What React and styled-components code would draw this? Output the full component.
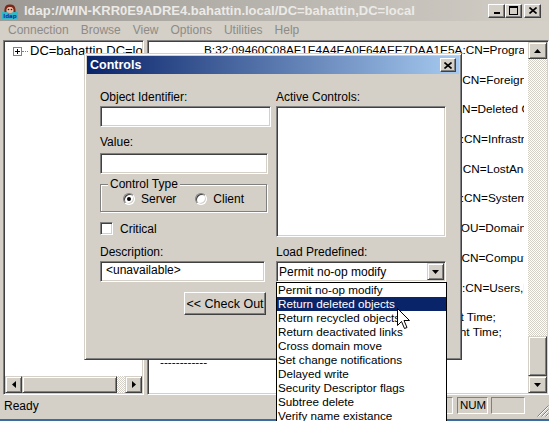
import React from 'react';
import styled, { createGlobalStyle, css } from 'styled-components';

const GlobalStyle = createGlobalStyle`
  html, body {
    margin: 0;
    padding: 0;
    background: #d4d0c8;
  }
  * {
    box-sizing: border-box;
  }
`;

const sunken = css`
  border: 1px solid;
  border-color: #808080 #ffffff #ffffff #808080;
  box-shadow: inset 1px 1px #404040, inset -1px -1px #d4d0c8;
  padding: 1px;
`;

const raised = css`
  border: 1px solid;
  border-color: #d4d0c8 #404040 #404040 #d4d0c8;
  box-shadow: inset 1px 1px #ffffff, inset -1px -1px #808080;
`;

const dither = css`
  background-color: #ffffff;
  background-image: repeating-conic-gradient(#d4d0c8 0 25%, #ffffff 0 50%);
  background-size: 2px 2px;
`;

const resultLines = [
  { indent: 44, text: 'B:32:09460C08AF1E4A4EA0F64AEE7DAA1E5A:CN=Program Data,DC=bahattin,DC=local;' },
  { text: '' },
  { indent: 40, text: 'B:32:22B70C67D56E4EFB91E9300FCA3DC1AA:CN=ForeignSecurityPrincipals,DC=bahattin,DC=local;' },
  { text: '' },
  { indent: 40, text: 'B:32:18E2EA80684F11D2B9AA00C04F79F805:CN=Deleted Objects,DC=bahattin,DC=local;' },
  { text: '' },
  { indent: 40, text: 'B:32:2FBAC1870ADE11D297C400C04FD8D5CD:CN=Infrastructure,DC=bahattin,DC=local;' },
  { text: '' },
  { indent: 40, text: 'B:32:AB8153B7768811D1ADED00C04FD8D5CD:CN=LostAndFound,DC=bahattin,DC=local;' },
  { text: '' },
  { indent: 40, text: 'B:32:AB1D30F3768811D1ADED00C04FD8D5CD:CN=System,DC=bahattin,DC=local;' },
  { text: '' },
  { indent: 40, text: 'B:32:A361B2FFFFD211D1AA4B00C04FD7D83A:OU=Domain Controllers,DC=bahattin,DC=local;' },
  { text: '' },
  { indent: 40, text: 'B:32:AA312825768811D1ADED00C04FD8D5CD:CN=Computers,DC=bahattin,DC=local;' },
  { text: '' },
  { indent: 40, text: 'B:32:A9D1CA15768811D1ADED00C04FD8D5CD:CN=Users,DC=bahattin,DC=local;' },
  { text: '' },
  { indent: 44, text: 'whenCreated: 3/8/2013 2:16:09 PM GTB Daylight Time;' },
  { indent: 44, text: 'whenChanged: 3/8/2013 2:17:52 PM GTB Daylight Time;' },
  { text: '' },
  { text: '------------' },
];

const predefined = [
  'Permit no-op modify',
  'Return deleted objects',
  'Return recycled objects',
  'Return deactivated links',
  'Cross domain move',
  'Set change notifications',
  'Delayed write',
  'Security Descriptor flags',
  'Subtree delete',
  'Verify name existance',
];

const menus = ['Connection', 'Browse', 'View', 'Options', 'Utilities', 'Help'];

const Arrow = ({ dir }) => {
  const vertical = dir === 'up' || dir === 'down';
  const points = {
    up: '3.5,0 7,4 0,4',
    down: '0,0 7,0 3.5,4',
    left: '4,0 4,7 0,3.5',
    right: '0,0 4,3.5 0,7',
  }[dir];
  return (
    <svg width={vertical ? 7 : 4} height={vertical ? 4 : 7} viewBox={vertical ? '0 0 7 4' : '0 0 4 7'}>
      <polygon points={points} fill="#000" />
    </svg>
  );
};

const CloseGlyph = () => (
  <svg width="8" height="7" viewBox="0 0 8 7">
    <path d="M0.5 0.5 L7.5 6.5 M7.5 0.5 L0.5 6.5" stroke="#000" strokeWidth="1.6" />
  </svg>
);

const AppIcon = () => (
  <svg width="16" height="16" viewBox="0 0 16 16">
    <rect x="0" y="9" width="16" height="7" fill="#33b8c8" />
    <text x="8" y="15" fontSize="5.5" fontFamily="DejaVu Sans, sans-serif" fontWeight="bold" fill="#1b2f94" textAnchor="middle">ldap</text>
    <circle cx="8" cy="6" r="4" fill="#e8b9a0" />
    <path d="M2.5 9 C2 4, 4 1, 8 1.5 C12 1, 14 4, 13.5 9 L11.5 9 C12 6, 11 4, 8 4 C5 4, 4 6, 4.5 9 Z" fill="#7b2616" />
    <circle cx="6.5" cy="6.5" r="0.8" fill="#222" />
    <circle cx="9.5" cy="6.5" r="0.8" fill="#222" />
  </svg>
);

const Cursor = styled.svg`
  position: absolute;
  left: 397px;
  top: 308px;
`;

const Window = styled.div`
  position: relative;
  width: 549px;
  height: 421px;
  overflow: hidden;
  display: flex;
  flex-direction: column;
  background: #d4d0c8;
  font-family: "Liberation Sans", Arial, sans-serif;
  font-size: 12px;
  color: #000;
`;

const TitleBar = styled.div`
  flex: none;
  height: 21px;
  display: flex;
  align-items: center;
  padding: 0 8px 0 2px;
  background: linear-gradient(to right, #9d9a95, #d3cfc7);
`;

const TitleText = styled.div`
  flex: 1;
  margin-left: 6px;
  font-weight: bold;
  font-size: 13px;
  color: #eceae6;
  white-space: nowrap;
`;

const CaptionButton = styled.div`
  width: 17px;
  height: 14px;
  margin-left: ${(p) => p.$gap || 0}px;
  display: flex;
  align-items: center;
  justify-content: center;
  background: #d4d0c8;
  border: 1px solid;
  border-color: #ffffff #404040 #404040 #ffffff;
  box-shadow: inset -1px -1px #808080;
`;

const MenuBar = styled.div`
  flex: none;
  height: 18px;
  display: flex;
  align-items: center;
  padding-left: 2px;
`;

const MenuItem = styled.span`
  padding: 0 6px;
  line-height: 18px;
  color: #8d8b87;
`;

const Body = styled.div`
  flex: 1;
  min-height: 0;
  display: flex;
  gap: 3px;
  padding: 1px 0 0 3px;
`;

const TreePane = styled.div`
  ${sunken};
  width: 141px;
  display: flex;
  flex-direction: column;
  background: #ffffff;
`;

const TreeArea = styled.div`
  flex: 1;
  padding: 1px 0 0 8px;
  overflow: hidden;
`;

const TreeRow = styled.div`
  height: 16px;
  display: flex;
  align-items: center;
  white-space: nowrap;
`;

const Expander = styled.svg`
  flex: none;
`;

const TreeDots = styled.span`
  flex: none;
  width: 6px;
  margin: 0 2px 0 0;
  border-top: 1px dotted #808080;
`;

const TreeLabel = styled.span`
  flex: none;
  font-size: 13px;
  line-height: 16px;
`;

const HScrollBar = styled.div`
  flex: none;
  height: 17px;
  display: flex;
`;

const VScrollBar = styled.div`
  flex: none;
  width: 19px;
  display: flex;
  flex-direction: column;
`;

const ScrollButton = styled.div`
  ${raised};
  flex: none;
  width: ${(p) => p.$w || 17}px;
  height: 17px;
  display: flex;
  align-items: center;
  justify-content: center;
  background: #d4d0c8;
`;

const Thumb = styled.div`
  ${raised};
  flex: none;
  background: #d4d0c8;
  width: ${(p) => (p.$vertical ? '100%' : `${p.$size}px`)};
  height: ${(p) => (p.$vertical ? `${p.$size}px` : '17px')};
`;

const Track = styled.div`
  ${dither};
  flex: 1;
  display: flex;
  flex-direction: column;
  justify-content: flex-end;
`;

const ResultPane = styled.div`
  ${sunken};
  flex: 1;
  min-width: 0;
  display: flex;
  background: #ffffff;
`;

const ResultText = styled.div`
  flex: 1;
  min-width: 0;
  overflow: hidden;
  padding: 1px 0 0 11px;
  border-right: 4px solid #ffffff;
`;

const ResultLine = styled.div`
  height: 14.85px;
  line-height: 14.85px;
  padding-left: ${(p) => p.$indent || 0}px;
  font-size: 11.8px;
  white-space: pre;
`;

const StatusBar = styled.div`
  flex: none;
  height: 24px;
  display: flex;
  align-items: flex-start;
  padding-top: 2px;
`;

const StatusText = styled.div`
  flex: 1;
  padding-left: 4px;
  line-height: 18px;
`;

const StatusPanel = styled.div`
  width: ${(p) => p.$w}px;
  height: 17px;
  margin-right: ${(p) => p.$mr || 0}px;
  padding: 0 2px;
  border: 1px solid;
  border-color: #808080 #ffffff #ffffff #808080;
  font-size: 11.5px;
  line-height: 15px;
`;

const SizeGrip = styled.div`
  width: 21px;
  height: 20px;
  display: flex;
  align-items: flex-end;
  justify-content: flex-end;
`;

const BottomEdge = styled.div`
  flex: none;
  height: 2px;
  background: #3c6ba0;
`;

const Dialog = styled.div`
  position: absolute;
  left: 84px;
  top: 53px;
  width: 378px;
  height: 307px;
  padding: 2px;
  display: flex;
  flex-direction: column;
  background: #d4d0c8;
  border: 1px solid;
  border-color: #d4d0c8 #404040 #404040 #d4d0c8;
  box-shadow: inset 1px 1px #ffffff, inset -1px -1px #808080;
`;

const DialogTitle = styled.div`
  flex: none;
  height: 18px;
  display: flex;
  align-items: center;
  justify-content: space-between;
  padding: 0 3px 0 3px;
  background: linear-gradient(to right, #0a246a, #a6caf0);
`;

const DialogCaption = styled.span`
  color: #ffffff;
  font-weight: bold;
  font-size: 12.5px;
`;

const DialogClose = styled.div`
  width: 16px;
  height: 14px;
  display: flex;
  align-items: center;
  justify-content: center;
  background: #d4d0c8;
  border: 1px solid;
  border-color: #ffffff #404040 #404040 #ffffff;
  box-shadow: inset -1px -1px #808080;
`;

const DialogBody = styled.div`
  display: grid;
  grid-template-columns: 171px 171px;
  column-gap: 5px;
  padding: 16px 0 0 13px;
`;

const Column = styled.div`
  display: flex;
  flex-direction: column;
  align-items: flex-start;
`;

const Label = styled.div`
  height: 14px;
  line-height: 14px;
  margin-top: ${(p) => p.$mt || 0}px;
  white-space: nowrap;
`;

const TextBox = styled.div`
  ${sunken};
  width: ${(p) => p.$w}px;
  height: 21px;
  margin-top: ${(p) => p.$mt || 0}px;
  padding: 0 5px;
  line-height: 17px;
  background: #ffffff;
  white-space: nowrap;
`;

const GroupBox = styled.fieldset`
  width: 167px;
  height: 35px;
  margin: 3px 0 0 0;
  padding: 0;
  min-width: 0;
  border: 1px solid #808080;
  box-shadow: 1px 1px 0 #ffffff, inset 1px 1px 0 #ffffff;
`;

const Legend = styled.legend`
  margin-left: 7px;
  padding: 0 2px;
  line-height: 14px;
  background: #d4d0c8;
`;

const RadioRow = styled.div`
  height: 16px;
  display: flex;
  align-items: center;
  gap: 19px;
  padding-left: 22px;
`;

const Option = styled.label`
  display: flex;
  align-items: center;
  gap: 6px;
`;

const Radio = styled.span`
  position: relative;
  width: 12px;
  height: 12px;
  border-radius: 50%;
  border: 1px solid;
  border-color: #808080 #ffffff #ffffff #808080;
  box-shadow: inset 1px 1px #404040, inset -1px -1px #d4d0c8;
  background: #ffffff;

  &::after {
    content: '';
    display: ${(p) => (p.$checked ? 'block' : 'none')};
    position: absolute;
    left: 3px;
    top: 3px;
    width: 4px;
    height: 4px;
    border-radius: 50%;
    background: #000;
  }
`;

const CheckRow = styled.div`
  margin-top: 10px;
  height: 13px;
  display: flex;
  align-items: center;
  gap: 7px;
`;

const CheckBox = styled.span`
  ${sunken};
  width: 13px;
  height: 13px;
  background: #ffffff;
`;

const Button = styled.div`
  width: 82px;
  height: 23px;
  margin: 10px 0 0 84px;
  display: flex;
  align-items: center;
  justify-content: center;
  font-size: 12.5px;
  white-space: nowrap;
  background: #d4d0c8;
  border: 1px solid;
  border-color: #ffffff #404040 #404040 #ffffff;
  box-shadow: inset -1px -1px #808080;
`;

const ListBox = styled.div`
  ${sunken};
  width: 170px;
  height: 131px;
  margin-top: 2px;
  background: #ffffff;
`;

const Combo = styled.div`
  ${sunken};
  position: relative;
  width: 170px;
  height: 21px;
  margin-top: 2px;
  display: flex;
  align-items: center;
  background: #ffffff;
`;

const ComboText = styled.span`
  flex: 1;
  padding-left: 1px;
  white-space: nowrap;
`;

const DropList = styled.div`
  position: absolute;
  left: -1px;
  top: calc(100% + 1px);
  width: 171px;
  border: 1px solid #000;
  background: #ffffff;
`;

const DropItem = styled.div`
  height: 14px;
  line-height: 14px;
  padding-left: 1px;
  font-size: 11.7px;
  white-space: nowrap;
  background: ${(p) => (p.$active ? '#0a246a' : '#ffffff')};
  color: ${(p) => (p.$active ? '#ffffff' : '#000000')};
`;

export default function App() {
  return (
    <>
      <GlobalStyle />
      <Window>
        <TitleBar>
          <AppIcon />
          <TitleText>ldap://WIN-KRR0E9ADRE4.bahattin.local/DC=bahattin,DC=local</TitleText>
          <CaptionButton>
            <svg width="8" height="7" viewBox="0 0 8 7">
              <rect x="1" y="5" width="6" height="2" fill="#000" />
            </svg>
          </CaptionButton>
          <CaptionButton>
            <svg width="9" height="9" viewBox="0 0 9 9">
              <rect x="0.5" y="0.5" width="8" height="8" fill="none" stroke="#000" />
              <rect x="0" y="0" width="9" height="2" fill="#000" />
            </svg>
          </CaptionButton>
          <CaptionButton $gap={2}>
            <CloseGlyph />
          </CaptionButton>
        </TitleBar>

        <MenuBar>
          {menus.map((m) => (
            <MenuItem key={m}>{m}</MenuItem>
          ))}
        </MenuBar>

        <Body>
          <TreePane>
            <TreeArea>
              <TreeRow>
                <Expander width="9" height="9" viewBox="0 0 9 9">
                  <rect x="0.5" y="0.5" width="8" height="8" fill="#fff" stroke="#808080" />
                  <path d="M2 4.5 H7 M4.5 2 V7" stroke="#000" />
                </Expander>
                <TreeDots />
                <TreeLabel>DC=bahattin,DC=local</TreeLabel>
              </TreeRow>
            </TreeArea>
            <HScrollBar>
              <ScrollButton>
                <Arrow dir="left" />
              </ScrollButton>
              <Thumb $size={95} />
              <Track />
              <ScrollButton>
                <Arrow dir="right" />
              </ScrollButton>
            </HScrollBar>
          </TreePane>

          <ResultPane>
            <ResultText>
              {resultLines.map((l, i) => (
                <ResultLine key={i} $indent={l.indent}>
                  {l.text}
                </ResultLine>
              ))}
            </ResultText>
            <VScrollBar>
              <ScrollButton $w={19}>
                <Arrow dir="up" />
              </ScrollButton>
              <Track>
                <Thumb $vertical $size={40} />
              </Track>
              <ScrollButton $w={19}>
                <Arrow dir="down" />
              </ScrollButton>
            </VScrollBar>
          </ResultPane>
        </Body>

        <StatusBar>
          <StatusText>Ready</StatusText>
          <StatusPanel $w={150} $mr={4} />
          <StatusPanel $w={31} $mr={3}>NUM</StatusPanel>
          <StatusPanel $w={34} $mr={3} />
          <SizeGrip>
            <svg width="12" height="12" viewBox="0 0 12 12">
              <path d="M11.5 0.5 L0.5 11.5 M11.5 4.5 L4.5 11.5 M11.5 8.5 L8.5 11.5" stroke="#808080" />
              <path d="M11.5 1.5 L1.5 11.5 M11.5 5.5 L5.5 11.5 M11.5 9.5 L9.5 11.5" stroke="#ffffff" />
            </svg>
          </SizeGrip>
        </StatusBar>
        <BottomEdge />

        <Dialog>
          <DialogTitle>
            <DialogCaption>Controls</DialogCaption>
            <DialogClose>
              <CloseGlyph />
            </DialogClose>
          </DialogTitle>
          <DialogBody>
            <Column>
              <Label>Object Identifier:</Label>
              <TextBox $w={171} $mt={2} />
              <Label $mt={8}>Value:</Label>
              <TextBox $w={168} $mt={4} />
              <GroupBox>
                <Legend>Control Type</Legend>
                <RadioRow>
                  <Option>
                    <Radio $checked />
                    Server
                  </Option>
                  <Option>
                    <Radio />
                    Client
                  </Option>
                </RadioRow>
              </GroupBox>
              <CheckRow>
                <CheckBox />
                Critical
              </CheckRow>
              <Label $mt={10}>Description:</Label>
              <TextBox $w={165} $mt={2}>&lt;unavailable&gt;</TextBox>
              <Button>&lt;&lt; Check Out</Button>
            </Column>
            <Column>
              <Label>Active Controls:</Label>
              <ListBox />
              <Label $mt={8}>Load Predefined:</Label>
              <Combo>
                <ComboText>Permit no-op modify</ComboText>
                <ScrollButton>
                  <Arrow dir="down" />
                </ScrollButton>
                <DropList>
                  {predefined.map((item, i) => (
                    <DropItem key={item} $active={i === 1}>
                      {item}
                    </DropItem>
                  ))}
                </DropList>
              </Combo>
            </Column>
          </DialogBody>
        </Dialog>

        <Cursor width="13" height="22" viewBox="0 0 13 22">
          <path d="M0.5 0.5 L0.5 17.5 L4.5 13.5 L7.5 20.5 L10 19.5 L7 12.5 L12.5 12.5 Z" fill="#fff" stroke="#000" />
        </Cursor>
      </Window>
    </>
  );
}
